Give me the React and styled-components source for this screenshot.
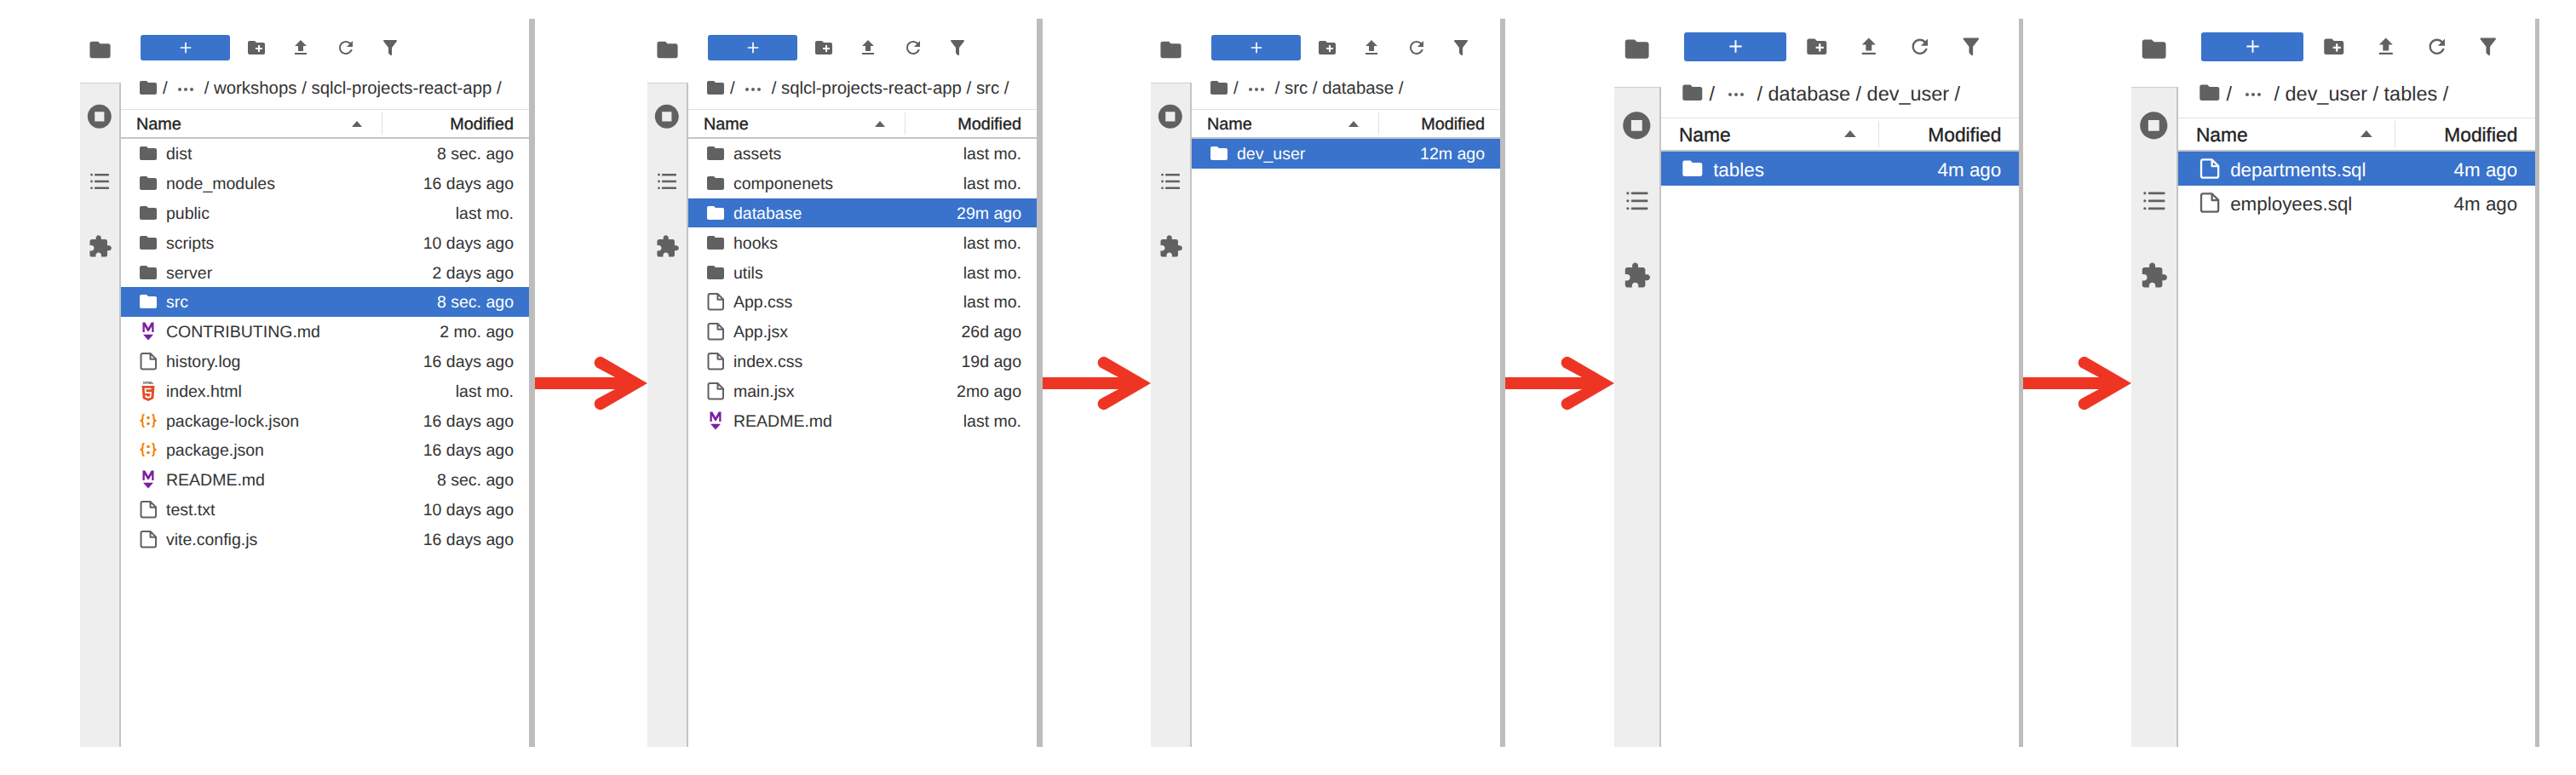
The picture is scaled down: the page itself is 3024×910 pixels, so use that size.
import React from "react";
import styled, { createGlobalStyle } from "styled-components";

const Global = createGlobalStyle`
  html, body { margin: 0; background: #fff; }
  * { box-sizing: border-box; }
`;

const Page = styled.div`
  display: flex;
  align-items: stretch;
  width: 3024px;
  height: 910px;
  padding: 22px 0 33px 94px;
  font-family: "Liberation Sans", Arial, sans-serif;
  text-rendering: geometricPrecision;
  color: #333;
  overflow: hidden;
`;

const Panel = styled.section`
  --s: ${(p) => p.$scale};
  --pad: ${(p) => p.$pad}px;
  flex: none;
  display: flex;
  width: ${(p) => p.$width}px;
  border-right: ${(p) => p.$bar}px solid #bdbdbd;
`;

const LeftColumn = styled.div`
  flex: none;
  display: flex;
  flex-direction: column;
  width: calc(var(--s) * 48px);
`;

const TabHead = styled.div`
  flex: none;
  height: calc(var(--pad) + var(--s) * 56px);
  display: flex;
  justify-content: center;
  padding-top: calc(var(--pad) + var(--s) * 3px);
  padding-right: 2px;
  color: #616161;
`;

const Rail = styled.nav`
  flex: 1;
  background: #eeeeee;
  border-top: 1.5px solid #cfcfcf;
  border-right: 2px solid #c4c4c4;
  display: flex;
  flex-direction: column;
  align-items: center;
  color: #616161;
`;

const RailSlot = styled.div`
  flex: none;
  height: calc(var(--s) * 76.8px);
  width: 100%;
  display: flex;
  align-items: center;
  justify-content: center;
`;

const Browser = styled.div`
  flex: 1;
  min-width: 0;
  display: flex;
  flex-direction: column;
`;

const Toolbar = styled.div`
  flex: none;
  display: flex;
  align-items: center;
  margin-top: var(--pad);
  height: calc(var(--s) * 30px);
  padding-left: calc(var(--s) * 23px);
  color: #616161;
`;

const NewButton = styled.div`
  flex: none;
  width: calc(var(--s) * 105px);
  height: 100%;
  border-radius: 3px;
  background: #3973cb;
  color: #fff;
  display: flex;
  align-items: center;
  justify-content: center;
  margin-right: calc(var(--s) * 5px);
`;

const ToolSlot = styled.div`
  flex: none;
  width: calc(var(--s) * 52.3px);
  display: flex;
  justify-content: center;
`;

const Crumbs = styled.div`
  flex: none;
  height: calc(var(--s) * 57px);
  padding: calc(var(--s) * 7px) 0 0 calc(var(--s) * 20px);
  display: flex;
  align-items: center;
  font-size: calc(var(--s) * 20.4px);
  white-space: pre;
`;

const CrumbText = styled.span`
  padding-top: calc(var(--s) * 3px);
`;

const CrumbSlash = styled(CrumbText)`
  margin-left: calc(var(--s) * 5px);
`;

const CrumbDots = styled(CrumbText)`
  display: inline-flex;
  justify-content: center;
  width: calc(var(--s) * 43px);
  color: #616161;
`;

const Header = styled.div`
  flex: none;
  height: calc(var(--s) * 35px);
  display: flex;
  align-items: stretch;
  border-top: 1.5px solid #e0e0e0;
  border-bottom: 2.5px solid #c4c4c4;
  font-size: calc(var(--s) * 19.8px);
  color: #222;
  -webkit-text-stroke: 0.35px #222;
`;

const HeadLabel = styled.span`
  padding-top: calc(var(--s) * 3px);
`;

const NameHead = styled.div`
  flex: 1;
  display: flex;
  align-items: center;
  justify-content: space-between;
  padding: 0 calc(var(--s) * 23px) 0 calc(var(--s) * 18px);
  color: #222;
`;

const ModifiedHead = styled.div`
  flex: none;
  position: relative;
  width: ${(p) => p.$width}px;
  display: flex;
  align-items: center;
  justify-content: flex-end;
  padding-right: calc(var(--s) * 18px);
  &::before {
    content: "";
    position: absolute;
    left: 0;
    top: 3px;
    bottom: 3px;
    width: 1px;
    background: #e0e0e0;
  }
`;

const Caret = styled.svg`
  width: calc(var(--s) * 12px);
  height: calc(var(--s) * 7px);
  fill: #616161;
`;

const Row = styled.div`
  flex: none;
  height: calc(var(--s) * 34.8px);
  display: flex;
  align-items: center;
  padding: 0 calc(var(--s) * 18px) 0 calc(var(--s) * 20px);
  font-size: calc(var(--s) * 19.5px);
  background: ${(p) => (p.$selected ? "#3973cb" : "transparent")};
  color: ${(p) => (p.$selected ? "#fff" : "#333")};
`;

const RowName = styled.span`
  flex: 1;
  margin-left: calc(var(--s) * 9px);
  padding-top: calc(var(--s) * 3px);
  white-space: nowrap;
`;

const RowDate = styled.span`
  flex: none;
  padding-top: calc(var(--s) * 3px);
  white-space: nowrap;
`;

const Icon = styled.svg`
  flex: none;
  display: block;
  width: calc(var(--s) * ${(p) => p.$size || 24}px);
  height: calc(var(--s) * ${(p) => p.$size || 24}px);
  color: ${(p) => (p.$selected ? "#fff" : p.$tint || "#616161")};
  fill: currentColor;
`;

const ArrowSlot = styled.div`
  flex: none;
  width: ${(p) => p.$width}px;
  display: flex;
  align-items: center;
`;

const ArrowSvg = styled.svg`
  display: block;
  width: 100%;
  height: 70px;
  fill: #ee3524;
`;

const Folder = (p) => (
  <Icon viewBox="0 0 24 24" {...p}>
    <path d="M10 4H4c-1.1 0-2 .9-2 2v12c0 1.1.9 2 2 2h16c1.1 0 2-.9 2-2V8c0-1.1-.9-2-2-2h-8l-2-2z" />
  </Icon>
);

const NewFolder = () => (
  <Icon viewBox="0 0 24 24">
    <path d="M20 6h-8l-2-2H4c-1.1 0-2 .9-2 2v12c0 1.1.9 2 2 2h16c1.1 0 2-.9 2-2V8c0-1.1-.9-2-2-2zm-1 8h-3v3h-2v-3h-3v-2h3V9h2v3h3v2z" />
  </Icon>
);

const Upload = () => (
  <Icon viewBox="0 0 24 24">
    <path d="M9 16h6v-6h4l-7-7-7 7h4zm-4 2h14v2H5z" />
  </Icon>
);

const Refresh = () => (
  <Icon viewBox="0 0 24 24">
    <path d="M17.65 6.35C16.2 4.9 14.21 4 12 4c-4.42 0-7.99 3.58-7.99 8s3.57 8 7.99 8c3.73 0 6.84-2.55 7.73-6h-2.08c-.82 2.33-3.04 4-5.65 4-3.31 0-6-2.69-6-6s2.69-6 6-6c1.66 0 3.14.69 4.22 1.78L13 11h7V4l-2.35 2.35z" />
  </Icon>
);

const Filter = () => (
  <Icon viewBox="0 0 24 24">
    <path d="M14 12v7.88c.04.3-.06.62-.29.83-.39.39-1.02.39-1.41 0l-2.01-2.01c-.23-.23-.33-.54-.29-.83V12h-.03L4.21 4.62c-.34-.43-.26-1.06.17-1.4.19-.14.4-.22.62-.22h14c.22 0 .43.08.62.22.43.34.51.97.17 1.4L14.03 12H14z" />
  </Icon>
);

const Plus = () => (
  <Icon viewBox="0 0 24 24" $size={20} $selected>
    <path d="M11 4.500h2V11h6.500v2H13v6.500h-2V13H4.500v-2H11z" />
  </Icon>
);

const Stop = () => (
  <Icon viewBox="0 0 24 24" $size={33.6}>
    <path d="M12 2C6.48 2 2 6.48 2 12s4.480 10 10 10 10-4.480 10-10S17.520 2 12 2zm4 14H8V8h8v8z" />
  </Icon>
);

const ListIcon = () => (
  <Icon viewBox="0 0 24 24" $size={24}>
    <circle cx="2.500" cy="4.200" r="1.400" />
    <circle cx="2.500" cy="12" r="1.400" />
    <circle cx="2.500" cy="19.800" r="1.400" />
    <rect x="6" y="3" width="17" height="2.400" rx=".6" />
    <rect x="6" y="10.800" width="17" height="2.400" rx=".6" />
    <rect x="6" y="18.600" width="17" height="2.400" rx=".6" />
  </Icon>
);

const Puzzle = () => (
  <Icon viewBox="0 0 24 24" $size={29}>
    <path d="M20.500 11H19V7c0-1.100-.9-2-2-2h-4V3.500C13 2.120 11.880 1 10.500 1S8 2.120 8 3.500V5H4c-1.100 0-1.990.9-1.990 2v3.800H3.500c1.490 0 2.700 1.210 2.700 2.700s-1.210 2.700-2.700 2.700H2V20c0 1.100.9 2 2 2h3.800v-1.500c0-1.490 1.210-2.700 2.700-2.700 1.490 0 2.700 1.210 2.700 2.700V22H17c1.100 0 2-.9 2-2v-4h1.500c1.380 0 2.500-1.120 2.500-2.500S21.880 11 20.500 11z" />
  </Icon>
);

const FileIcon = (p) => (
  <Icon viewBox="0 0 24 24" {...p}>
    <path
      d="M3.500 5C3.500 3.800 4.300 3 5.500 3h9L21 9.500v10c0 1.200-.8 2-2 2H5.500c-1.200 0-2-.8-2-2zM14.500 3.300v6.400h6.200"
      fill="none"
      stroke="currentColor"
      strokeWidth="2"
      strokeLinejoin="round"
    />
  </Icon>
);

const MarkdownIcon = () => (
  <Icon viewBox="0 0 24 24" $tint="#7b1fa2">
    <path d="M5.500 1.500h2.800L12 8l3.700-6.500h2.800V13h-2.300V6.200L12.700 12h-1.400L7.800 6.200V13H5.500z" />
    <path d="M6 15.800h12L12 22.500z" />
  </Icon>
);

const HtmlIcon = () => (
  <Icon viewBox="0 0 24 24" $tint="#e44d26">
    <text x="12" y="4" fontSize="4.400" fontWeight="700" textAnchor="middle" fill="#333" fontFamily="Liberation Sans">
      HTML
    </text>
    <path d="M4.500 6h15l-1.200 15L12 24l-6.300-3z" />
    <path
      d="M15.500 9.500H8.500l.4 4.700h6.200l-.5 4.600-2.600 1-2.600-1-.2-1.600"
      fill="none"
      stroke="#fff"
      strokeWidth="1.700"
    />
  </Icon>
);

const JsonIcon = () => (
  <Icon viewBox="0 0 24 24" $tint="#f57c00">
    <path
      d="M7.500 4.800C5 4.800 5.500 7 5.500 9c0 2-1.200 3-3 3 1.800 0 3 1 3 3 0 2-.5 4.200 2 4.200M16.500 4.800c2.500 0 2 2.200 2 4.200 0 2 1.200 3 3 3-1.800 0-3 1-3 3 0 2 .5 4.200-2 4.200"
      fill="none"
      stroke="currentColor"
      strokeWidth="2"
    />
    <circle cx="12" cy="8.500" r="1.800" />
    <circle cx="12" cy="15.500" r="1.800" />
  </Icon>
);

const kinds = {
  folder: Folder,
  file: FileIcon,
  md: MarkdownIcon,
  html: HtmlIcon,
  json: JsonIcon,
};

const Arrow = ({ width }) => {
  const w = width;
  return (
    <ArrowSlot $width={w}>
      <ArrowSvg viewBox={`0 0 ${w} 70`}>
        <path
          d={`M${w} 35L${w - 52.9} 4.300A7 7 0 0 0 ${w - 58.5} 17.100L${w - 38} 28H0V42H${w - 38}L${w - 58.5} 52.900A7 7 0 0 0 ${w - 52.9} 65.700Z`}
        />
      </ArrowSvg>
    </ArrowSlot>
  );
};

const panels = [
  {
    width: 534, bar: 7, scale: 1, pad: 19, modified: 173, arrow: 132,
    crumbs: "workshops / sqlcl-projects-react-app /",
    rows: [
      ["folder", "dist", "8 sec. ago"],
      ["folder", "node_modules", "16 days ago"],
      ["folder", "public", "last mo."],
      ["folder", "scripts", "10 days ago"],
      ["folder", "server", "2 days ago"],
      ["folder", "src", "8 sec. ago", true],
      ["md", "CONTRIBUTING.md", "2 mo. ago"],
      ["file", "history.log", "16 days ago"],
      ["html", "index.html", "last mo."],
      ["json", "package-lock.json", "16 days ago"],
      ["json", "package.json", "16 days ago"],
      ["md", "README.md", "8 sec. ago"],
      ["file", "test.txt", "10 days ago"],
      ["file", "vite.config.js", "16 days ago"],
    ],
  },
  {
    width: 464, bar: 7, scale: 1, pad: 19, modified: 155, arrow: 127,
    crumbs: "sqlcl-projects-react-app / src /",
    rows: [
      ["folder", "assets", "last mo."],
      ["folder", "componenets", "last mo."],
      ["folder", "database", "29m ago", true],
      ["folder", "hooks", "last mo."],
      ["folder", "utils", "last mo."],
      ["file", "App.css", "last mo."],
      ["file", "App.jsx", "26d ago"],
      ["file", "index.css", "19d ago"],
      ["file", "main.jsx", "2mo ago"],
      ["md", "README.md", "last mo."],
    ],
  },
  {
    width: 416, bar: 6, scale: 1, pad: 19, modified: 143, arrow: 128,
    crumbs: "src / database /",
    rows: [["folder", "dev_user", "12m ago", true]],
  },
  {
    width: 480, bar: 5, scale: 1.15, pad: 15.6, modified: 165, arrow: 127,
    crumbs: "database / dev_user /",
    rows: [["folder", "tables", "4m ago", true]],
  },
  {
    width: 479, bar: 5, scale: 1.15, pad: 15.6, modified: 165,
    crumbs: "dev_user / tables /",
    rows: [
      ["file", "departments.sql", "4m ago", true],
      ["file", "employees.sql", "4m ago"],
    ],
  },
];

const FilePanel = ({ data }) => (
  <Panel $width={data.width} $bar={data.bar} $scale={data.scale} $pad={data.pad}>
    <LeftColumn>
      <TabHead>
        <Folder $size={29} />
      </TabHead>
      <Rail>
        <RailSlot><Stop /></RailSlot>
        <RailSlot><ListIcon /></RailSlot>
        <RailSlot><Puzzle /></RailSlot>
      </Rail>
    </LeftColumn>
    <Browser>
      <Toolbar>
        <NewButton><Plus /></NewButton>
        <ToolSlot><NewFolder /></ToolSlot>
        <ToolSlot><Upload /></ToolSlot>
        <ToolSlot><Refresh /></ToolSlot>
        <ToolSlot><Filter /></ToolSlot>
      </Toolbar>
      <Crumbs>
        <Folder />
        <CrumbSlash>/</CrumbSlash>
        <CrumbDots>
          <svg width="24" height="8" viewBox="0 0 24 8" fill="currentColor">
            <circle cx="5" cy="4" r="2" />
            <circle cx="12" cy="4" r="2" />
            <circle cx="19" cy="4" r="2" />
          </svg>
        </CrumbDots>
        <CrumbText>/ {data.crumbs}</CrumbText>
      </Crumbs>
      <Header>
        <NameHead>
          <HeadLabel>Name</HeadLabel>
          <Caret viewBox="0 0 12 7"><path d="M6 0l6 7H0z" /></Caret>
        </NameHead>
        <ModifiedHead $width={data.modified}>
          <HeadLabel>Modified</HeadLabel>
        </ModifiedHead>
      </Header>
      {data.rows.map(([kind, name, date, selected]) => {
        const Kind = kinds[kind];
        return (
          <Row key={name} $selected={selected}>
            <Kind $selected={selected} />
            <RowName>{name}</RowName>
            <RowDate>{date}</RowDate>
          </Row>
        );
      })}
    </Browser>
  </Panel>
);

export default function App() {
  return (
    <>
      <Global />
      <Page>
        {panels.map((data) => (
          <React.Fragment key={data.crumbs}>
            <FilePanel data={data} />
            {data.arrow ? <Arrow width={data.arrow} /> : null}
          </React.Fragment>
        ))}
      </Page>
    </>
  );
}
